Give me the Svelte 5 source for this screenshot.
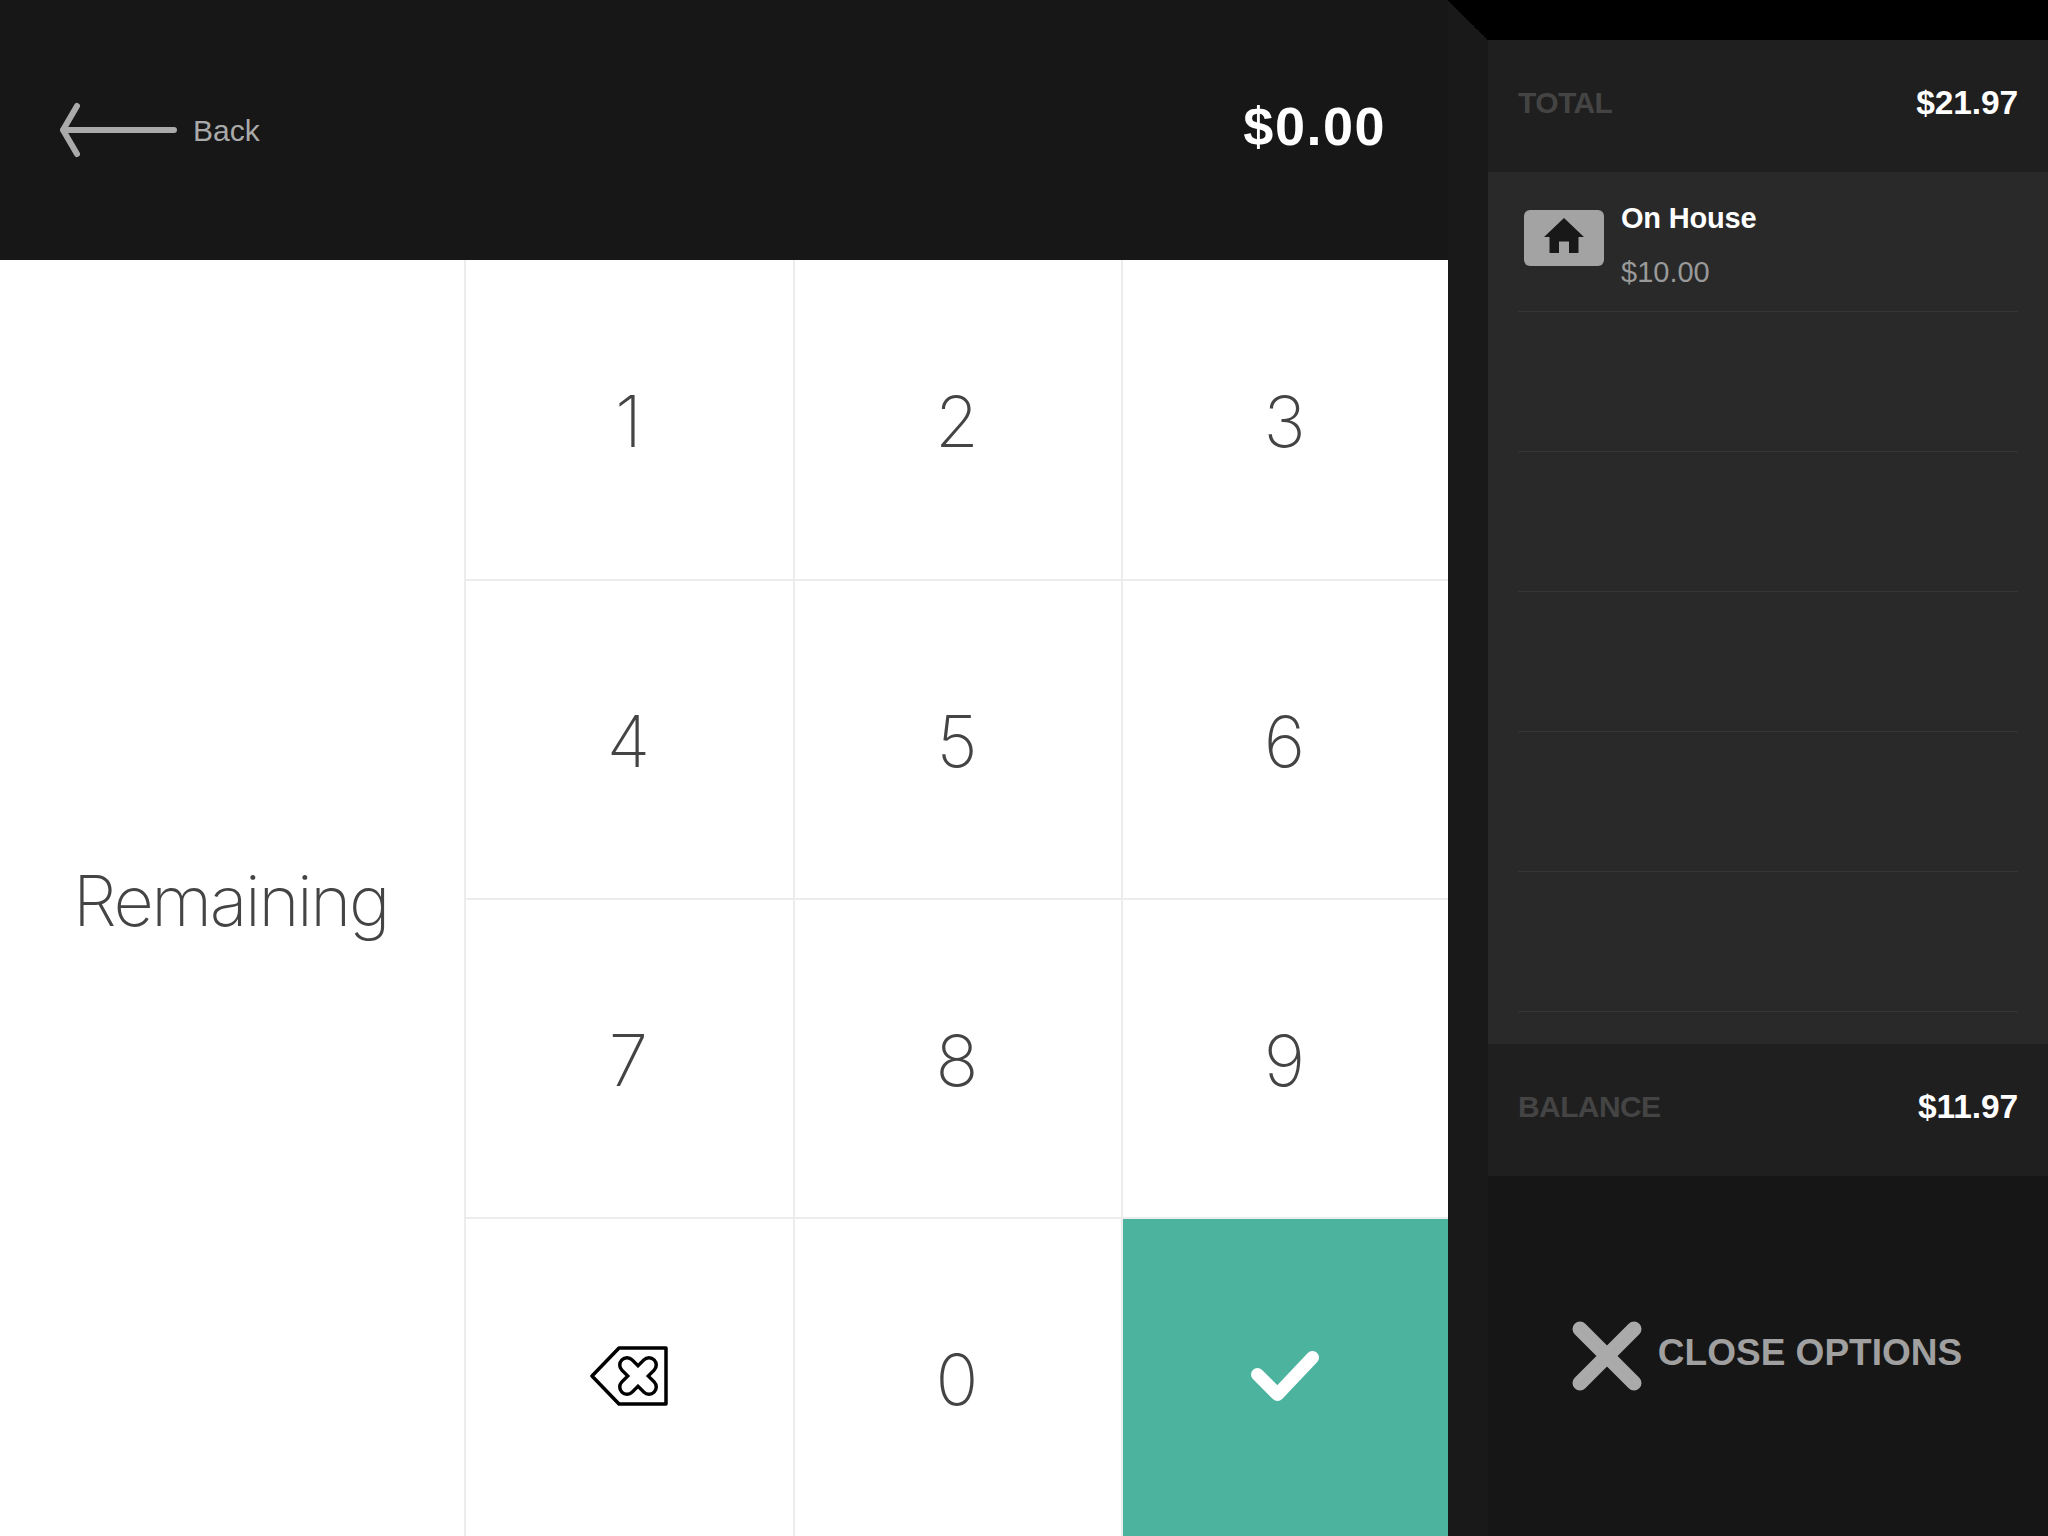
<script>
  const rows = [["1","2","3"],["4","5","6"],["7","8","9"]];
  const slots = [0,1,2,3,4,5];
</script>

<div class="app">
  <main class="main">
    <header class="head">
      <div class="back">
        <svg width="124" height="60" viewBox="0 0 124 60" fill="none" stroke="#aaa" stroke-width="6" stroke-linecap="round" stroke-linejoin="round">
          <path d="M17 6 3 30l14 24M3 30h111"/>
        </svg>
        <span>Back</span>
      </div>
      <div class="amount">$0.00</div>
    </header>
    <div class="body">
      <div class="label">Remaining</div>
      <div class="pad">
        {#each rows as row}
          {#each row as k}
            <div class="key">{k}</div>
          {/each}
        {/each}
        <div class="key last">
          <svg class="bksp" width="80" height="60" viewBox="0 0 80 60" fill="none" stroke-linejoin="round" stroke-linecap="round">
            <path d="M29 2h47v56H29L2 30Z" stroke="#000" stroke-width="3.5"/>
            <path d="M37 19l22 22M59 19 37 41" stroke="#000" stroke-width="18"/>
            <path d="M37 19l22 22M59 19 37 41" stroke="#fff" stroke-width="11"/>
          </svg>
        </div>
        <div class="key last">0</div>
        <div class="key ok">
          <svg width="70" height="54" viewBox="0 0 70 54" fill="none" stroke="#fff" stroke-width="13" stroke-linecap="round" stroke-linejoin="round">
            <path d="M6.500 23.500l20 20 35-37"/>
          </svg>
        </div>
      </div>
    </div>
  </main>
  <div class="strip"></div>
  <aside class="side">
    <div class="top"></div>
    <div class="sum">
      <span class="sum-label">TOTAL</span>
      <span class="sum-val">$21.97</span>
    </div>
    <div class="list">
      <div class="row">
        <div class="badge">
          <svg class="house" width="44" height="38" viewBox="0 0 44 38" fill="#181818">
            <path d="M22 1 42 20H36.500V36H27V24.500H17V36H7.500V20H2Z"/>
          </svg>
        </div>
        <div class="tender">
          <div class="t-name">On House</div>
          <div class="t-val">$10.00</div>
        </div>
      </div>
      {#each slots.slice(1) as s}
        <div class="row"></div>
      {/each}
    </div>
    <div class="sum">
      <span class="sum-label">BALANCE</span>
      <span class="sum-val">$11.97</span>
    </div>
    <div class="close">
      <svg width="70" height="70" viewBox="0 0 70 70" fill="none" stroke="#aaa" stroke-width="15" stroke-linecap="round">
        <path d="M8 8l54 54M62 8 8 62"/>
      </svg>
      <span>CLOSE OPTIONS</span>
    </div>
  </aside>
</div>

<style>
  :global(body) { margin: 0; background: #000; }
  .app {
    display: flex;
    width: 2048px;
    height: 1536px;
    overflow: hidden;
    font-family: "Liberation Sans", Arial, sans-serif;
    background: #000;
  }
  .main { width: 1448px; display: flex; flex-direction: column; background: #fff; }
  .head {
    height: 260px;
    background: #171717;
    display: flex;
    align-items: center;
    justify-content: space-between;
    padding: 0 62px 0 60px;
    box-sizing: border-box;
  }
  .back { display: flex; align-items: center; gap: 9px; color: #aaa; font-size: 30px; }
  .back span { margin-top: 2px; }
  .amount { color: #fff; font-weight: 700; font-size: 54px; letter-spacing: 1.500px; margin-top: -8px; }
  .body { flex: 1; display: flex; min-height: 0; }
  .label {
    width: 464px;
    display: flex;
    align-items: center;
    justify-content: center;
    font-family: "Inter", sans-serif;
    font-weight: 200;
    font-size: 70px;
    color: #444;
    letter-spacing: -2.400px;
    padding: 5px 3px 0 0;
    box-sizing: border-box;
  }
  .pad {
    flex: 1;
    display: grid;
    grid-template-columns: 329px 328px 327px;
    grid-template-rows: 321px 319px 319px 317px;
  }
  .key {
    display: flex;
    align-items: center;
    justify-content: center;
    border-left: 2px solid #ececec;
    border-bottom: 2px solid #ececec;
    box-sizing: border-box;
    font-family: "Inter", sans-serif;
    font-weight: 200;
    font-size: 71px;
    color: #444;
    padding: 2px 2px 0 0;
  }
  .key.last { border-bottom: 0; }
  .key.ok { background: #4bb39e; border-bottom: 0; background-clip: padding-box; padding: 0; }
  .bksp { margin: 0 -2px 6px 0; }
  .strip {
    width: 40px;
    background: #191919 linear-gradient(to top right, #191919 50%, #000 50%) no-repeat 0 0 / 40px 40px;
  }
  .side { flex: 1; display: flex; flex-direction: column; background: #161616; }
  .top { height: 40px; background: #000; }
  .sum {
    height: 132px;
    background: #1f1f1f;
    display: flex;
    align-items: center;
    justify-content: space-between;
    padding: 0 30px 6px;
    box-sizing: border-box;
    font-weight: 700;
  }
  .sum-label { color: #444; font-size: 30px; letter-spacing: -0.600px; }
  .sum-val { color: #fff; font-size: 33.500px; letter-spacing: -0.100px; }
  .list { height: 872px; background: #292929; padding: 0 30px 32px; box-sizing: border-box; }
  .row {
    height: 140px;
    border-bottom: 1px solid #353535;
    box-sizing: border-box;
    display: flex;
    padding: 38px 0 0 6px;
    gap: 17px;
  }
  .badge {
    width: 80px;
    height: 56px;
    background: #a3a3a3;
    border-radius: 6px;
    display: flex;
    align-items: center;
    justify-content: center;
  }
  .house { margin-bottom: 5px; }
  .tender { margin-top: -9px; }
  .t-name { color: #fff; font-weight: 700; font-size: 29px; line-height: 34px; letter-spacing: -0.200px; }
  .t-val { color: #999; font-size: 29px; line-height: 34px; margin-top: 20px; }
  .close {
    flex: 1;
    display: flex;
    align-items: center;
    justify-content: center;
    gap: 16px;
    color: #a0a0a0;
    font-weight: 700;
    font-size: 37px;
    padding-right: 2px;
  }
  .close span { margin-bottom: 7px; }
</style>
